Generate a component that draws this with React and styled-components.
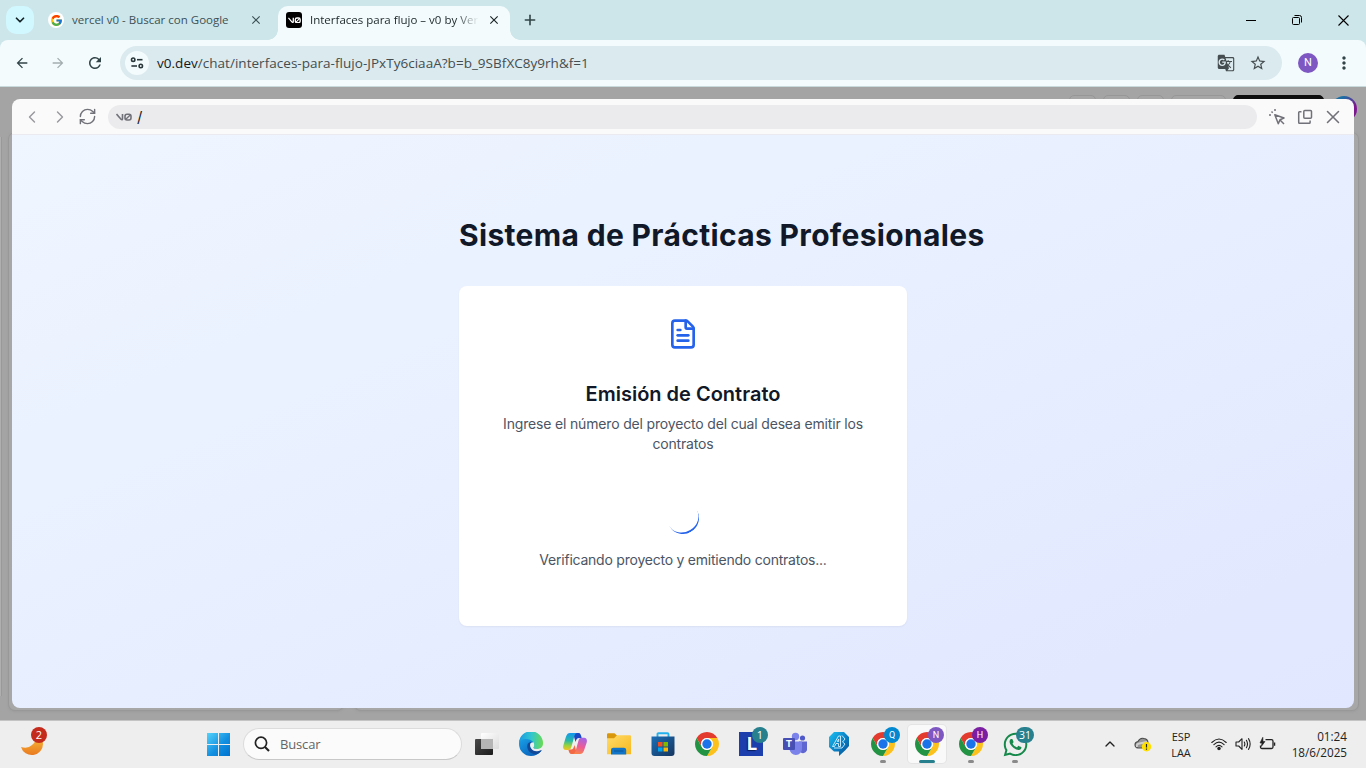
import React from "react";
import styled, { createGlobalStyle } from "styled-components";
import { ChevronLeft, ChevronRight, ChevronDown, ChevronUp, RefreshCw, X, Plus, FileText } from "lucide-react";
import { FcGoogle } from "react-icons/fc";
import { MdArrowBack, MdArrowForward, MdRefresh, MdStarBorder, MdGTranslate, MdMoreVert, MdClose } from "react-icons/md";
import { FaWhatsapp } from "react-icons/fa";

const GlobalStyle = createGlobalStyle`
  * { box-sizing: border-box; }
  body { margin: 0; overflow: hidden; }
  svg { display: block; flex: none; }
`;

const ui = `"Open Sans", "Noto Sans", sans-serif`;

const Screen = styled.div`
  width: 1366px;
  height: 768px;
  display: flex;
  flex-direction: column;
  font-family: ${ui};
  color: #1f2a2e;
  overflow: hidden;
`;

/* Browser chrome */
const TabStrip = styled.header`
  height: 40px;
  display: flex;
  align-items: flex-start;
  background: #cde6ea;
  padding-left: 6px;
`;

const TabSearch = styled.div`
  width: 28px;
  height: 28px;
  margin-top: 6px;
  border-radius: 10px;
  background: #d1f7ff;
  display: grid;
  place-items: center;
`;

const Tab = styled.div`
  position: relative;
  width: ${(p) => p.$width}px;
  height: 34px;
  margin-top: 6px;
  padding: 0 ${(p) => (p.$active ? 9 : 15)}px 6px ${(p) => (p.$active ? 8 : 14)}px;
  display: flex;
  align-items: center;
  gap: 8px;
  border-radius: 10px 10px 0 0;
  background: ${(p) => (p.$active ? "#f4fbfd" : "transparent")};
  color: ${(p) => (p.$active ? "#1b2629" : "#3c5155")};

  &::before,
  &::after {
    content: "";
    display: ${(p) => (p.$active ? "block" : "none")};
    position: absolute;
    bottom: 0;
    width: 10px;
    height: 10px;
  }
  &::before {
    left: -10px;
    background: radial-gradient(circle at 0 0, transparent 9.5px, #f4fbfd 10px);
  }
  &::after {
    right: -10px;
    background: radial-gradient(circle at 100% 0, transparent 9.5px, #f4fbfd 10px);
  }
`;

const TabTitle = styled.span`
  flex: 1;
  white-space: nowrap;
  font-size: 11.5px;
  line-height: 18px;
  mask-image: ${(p) => (p.$fade ? "linear-gradient(90deg, #000 86%, transparent 100%)" : "none")};
`;

const Favicon = styled.span`
  width: 16px;
  height: 16px;
  display: grid;
  place-items: center;
  background: ${(p) => (p.$dark ? "#000" : "#fff")};
  border-radius: ${(p) => (p.$dark ? "3px" : "50%")};
`;

const NewTab = styled.div`
  margin: 12px 0 0 12px;
`;

const WindowControls = styled.div`
  margin-left: auto;
  display: flex;
  height: 40px;
`;

const WindowButton = styled.div`
  width: 46px;
  display: grid;
  place-items: center;
`;

const Toolbar = styled.div`
  background: #cde6ea;
`;

const ToolbarInner = styled.div`
  height: 47px;
  display: flex;
  align-items: center;
  padding: 0 12px 1px 14px;
  background: #f4fbfd;
  border-bottom: 1px solid #c9dadd;
  border-radius: 8px 8px 0 0;
`;

const NavIcon = styled.div`
  width: 16px;
  margin-right: 20px;
  display: grid;
  place-items: center;
  color: ${(p) => (p.$dim ? "#a3adaf" : "#314447")};
`;

const AddressBar = styled.div`
  height: 34px;
  width: 1162px;
  margin-left: -2px;
  border-radius: 17px;
  background: #dbeaee;
  display: flex;
  align-items: center;
  padding: 0 15px 0 5px;
  color: #454d50;
`;

const SiteInfo = styled.div`
  width: 24px;
  height: 24px;
  border-radius: 50%;
  background: #f4fbfd;
  display: grid;
  place-items: center;
  margin-right: 8px;
`;

const Url = styled.span`
  flex: 1;
  font-size: 13.5px;
  letter-spacing: 0.03px;
  white-space: nowrap;
  b { font-weight: 400; color: #15191b; }
`;

const AddressActions = styled.div`
  display: flex;
  align-items: center;
  gap: 14px;
`;

const Profile = styled.div`
  width: 20px;
  height: 20px;
  flex: none;
  margin: 0 16px;
  border-radius: 50%;
  background: #7e57c2;
  color: #fff;
  font: 11px/20px Roboto, sans-serif;
  text-align: center;
`;

/* Dimmed page that lies behind the preview */
const Workspace = styled.main`
  position: relative;
  height: 633px;
  display: flex;
  flex-direction: column;
  background: #a4a4a4;
`;

const PageHeader = styled.div`
  height: 45px;
  padding: 8px 9px 0 0;
  display: flex;
  justify-content: flex-end;
  gap: 7px;
`;

const PageButton = styled.div`
  height: 26px;
  width: ${(p) => p.$width}px;
  border-radius: 5px;
  border: 1px solid ${(p) => (p.$dark ? "#0d0d0d" : "#979797")};
  background: ${(p) => (p.$dark ? "#0d0d0d" : "#a6a6a6")};
`;

const PageAvatar = styled.div`
  width: 26px;
  height: 26px;
  margin-top: 1px;
  border-radius: 50%;
  background: linear-gradient(135deg, #1c6fa5 25%, #7d1790 65%);
`;

const PagePanels = styled.div`
  display: flex;
  flex: 1;
  padding: 0 7px 9px 0;
`;

const SidePanel = styled.div`
  width: 2px;
  margin: 5px 6px 15px 0;
  background: #afafaf;
  border-right: 1px solid #999;
`;

const PagePanel = styled.div`
  flex: ${(p) => (p.$width ? "none" : 1)};
  width: ${(p) => p.$width || 0}px;
  margin-right: ${(p) => (p.$width ? 10 : 0)}px;
  border: 1px solid #989898;
  border-radius: 7px;
  background: #a7a7a7;
  box-shadow: 0 1px 2px #9696968c;
`;

const Preview = styled.section`
  position: absolute;
  inset: 12px;
  display: flex;
  flex-direction: column;
  border-radius: 8px;
  overflow: hidden;
`;

const PreviewBar = styled.div`
  height: 36px;
  flex: none;
  display: flex;
  align-items: center;
  padding: 0 10px;
  background: #fafafa;
  border-bottom: 1px solid #eaeaf0;
  color: #71717a;
`;

const PreviewNav = styled.div`
  width: 86px;
  display: flex;
  align-items: center;
  gap: 8px;
  svg:nth-child(-n + 2) { color: #98989f; }
`;

const PreviewPath = styled.div`
  width: 1150px;
  height: 24px;
  border-radius: 12px;
  background: #ebebed;
  display: flex;
  align-items: center;
  padding-left: 8px;
  gap: 5px;
  color: #1b1b1f;
  font: 15px/24px Inter, sans-serif;
`;

const PreviewActions = styled.div`
  margin-left: 12px;
  display: flex;
  align-items: center;
  gap: 12px;
  svg:last-child { margin-left: -3px; }
`;

const Canvas = styled.div`
  flex: 1;
  display: flex;
  flex-direction: column;
  align-items: center;
  padding-top: 82px;
  background: linear-gradient(to bottom right, #eff6ff, #e0e7ff);
  font-family: Inter, sans-serif;
`;

const Column = styled.div`
  width: 448px;
`;

const Heading = styled.h1`
  margin: 0 0 33px;
  font-size: 30px;
  line-height: 36px;
  font-weight: 700;
  letter-spacing: 0.33px;
  white-space: nowrap;
  color: #111827;
`;

const Card = styled.div`
  height: 340px;
  padding: 32px 24px 0;
  display: flex;
  flex-direction: column;
  align-items: center;
  background: #fff;
  border-radius: 8px;
  box-shadow: 0 1px 2px rgba(0, 0, 0, 0.05);
  text-align: center;
`;

const CardTitle = styled.h2`
  margin: 30px 0 6px;
  font-size: 20px;
  line-height: 28px;
  font-weight: 600;
  color: #111827;
`;

const CardText = styled.p`
  margin: 0;
  width: 400px;
  font-size: 14px;
  line-height: 20px;
  letter-spacing: ${(p) => p.$spacing};
  color: #4b5563;
`;

const Spinner = styled.div`
  width: 32px;
  height: 32px;
  margin: 48px 0 16px;
  border-radius: 50%;
  border-bottom: 2px solid #2563eb;
  transform: rotate(-31deg);
`;

/* Taskbar */
const Taskbar = styled.footer`
  height: 48px;
  padding-bottom: 1px;
  display: flex;
  align-items: center;
  background: #eeeeee;
  border-top: 1px solid #c4c4c4;
`;

const Weather = styled.div`
  position: relative;
  width: 196px;
  padding-left: 20px;
`;

const TaskButton = styled.div`
  position: relative;
  width: 38px;
  height: 38px;
  margin: 0 3px;
  border-radius: 4px;
  display: grid;
  place-items: center;
  background: ${(p) => (p.$active ? "#f9f9f9" : "transparent")};
  box-shadow: ${(p) => (p.$active ? "0 0 0 1px #e4e4e4" : "none")};

  &::after {
    content: "";
    display: ${(p) => (p.$running ? "block" : "none")};
    position: absolute;
    bottom: 0;
    left: 50%;
    width: ${(p) => (p.$active ? 16 : 6)}px;
    height: 3px;
    border-radius: 2px;
    transform: translateX(-50%);
    background: ${(p) => (p.$active ? "#27808e" : "#8a8a8a")};
  }
`;

const Badge = styled.span`
  position: absolute;
  top: ${(p) => p.$top ?? 2}px;
  left: ${(p) => p.$left ?? 20}px;
  width: ${(p) => p.$width || 16}px;
  height: 16px;
  border-radius: 8px;
  background: ${(p) => p.$color};
  color: #fff;
  text-align: center;
  font: ${(p) => p.$size || 9}px/16px ${(p) => (p.$size ? ui : "Roboto, sans-serif")};
`;

const SearchBox = styled.div`
  width: 219px;
  height: 32px;
  margin: 0 3px 0 3px;
  padding-left: 10px;
  display: flex;
  align-items: center;
  gap: 10px;
  border: 1px solid #dcdcdc;
  border-bottom-color: #c8c8c8;
  border-radius: 16px;
  background: #fbfbfb;
  color: #646464;
  font-size: 13px;
  letter-spacing: -0.15px;
`;

const Tray = styled.div`
  margin-left: auto;
  padding-right: 19px;
  display: flex;
  align-items: center;
  color: #222;
  font-size: 11px;
  line-height: 16px;
`;

const CloudStatus = styled.div`
  margin-left: 16px;
`;

const Language = styled.div`
  width: 30px;
  margin: 1px 15px 0 14px;
  text-align: center;
  letter-spacing: -0.1px;
`;

const Status = styled.div`
  display: flex;
  align-items: center;
  gap: 7.5px;
`;

const Clock = styled.div`
  width: 71px;
  text-align: right;
  font-size: 11.7px;
  line-height: 16px;
`;

const V0Logo = ({ width, color }) => (
  <svg width={width} height={width / 2} viewBox="0 0 32 16" fill="none" stroke={color} strokeWidth="3.2">
    <path d="M1 2 L10 12.5 Q13 15 13 11 V2" />
    <rect x="18" y="2.4" width="12" height="11.6" rx="4" />
    <path d="M19 13 L29 3.5" strokeWidth="2.6" />
  </svg>
);

const TuneIcon = () => (
  <svg width="14" height="14" viewBox="0 0 14 14" fill="none" stroke="#2a383b" strokeWidth="1.6">
    <circle cx="3.2" cy="3.7" r="1.7" />
    <path d="M7 3.7H12.5" />
    <circle cx="10.8" cy="10" r="1.7" />
    <path d="M1.4 10H7" />
  </svg>
);

const ChromeLogo = () => (
  <svg width="24" height="24" viewBox="0 0 48 48">
    <path fill="#e33b2e" d="M24 12H44.78A24 24 0 0 0 3.22 12L13.61 30A12 12 0 0 1 24 12Z" />
    <path fill="#fcc21b" d="M34.39 30L24 48A24 24 0 0 0 44.78 12H24A12 12 0 0 1 34.39 30Z" />
    <path fill="#229342" d="M13.61 30L3.22 12A24 24 0 0 0 24 48L34.39 30A12 12 0 0 1 13.61 30Z" />
    <circle cx="24" cy="24" r="12" fill="#fff" />
    <circle cx="24" cy="24" r="9.4" fill="#1a73e8" />
  </svg>
);

const WindowsLogo = () => (
  <svg width="23" height="23" viewBox="0 0 23 23">
    <defs>
      <linearGradient id="win" x1="0" y1="0" x2="23" y2="23" gradientUnits="userSpaceOnUse">
        <stop stopColor="#54d3fb" />
        <stop offset=".55" stopColor="#1390e0" />
        <stop offset="1" stopColor="#0072cf" />
      </linearGradient>
    </defs>
    <path fill="url(#win)" d="M0 0h11v11H0zM12 0h11v11H12zM0 12h11v11H0zM12 12h11v11H12z" />
  </svg>
);

const TaskView = () => (
  <svg width="24" height="24" viewBox="0 0 24 24">
    <defs>
      <linearGradient id="tvDark" x1="0" y1="0" x2="1" y2="1">
        <stop stopColor="#4a4a4a" />
        <stop offset="1" stopColor="#1c1c1c" />
      </linearGradient>
      <linearGradient id="tvLight" x1="0" y1="0" x2="1" y2="1">
        <stop stopColor="#fff" />
        <stop offset="1" stopColor="#dcdcdc" />
      </linearGradient>
    </defs>
    <rect x="6" y="1" width="18" height="16" rx="1" fill="url(#tvLight)" />
    <rect x="0" y="7" width="18" height="16" rx="1" fill="url(#tvDark)" />
    <path d="M6 7H18V17H6Z" fill="#b5b5b5" />
  </svg>
);

const EdgeLogo = () => (
  <svg width="24" height="24" viewBox="0 0 24 24">
    <defs>
      <linearGradient id="edTop" x1="0" y1="8" x2="24" y2="10" gradientUnits="userSpaceOnUse">
        <stop stopColor="#1c9be0" />
        <stop offset=".5" stopColor="#31c6d0" />
        <stop offset="1" stopColor="#69db52" />
      </linearGradient>
      <linearGradient id="edLeft" x1="2" y1="8" x2="12" y2="24" gradientUnits="userSpaceOnUse">
        <stop stopColor="#189be3" />
        <stop offset="1" stopColor="#0a65bd" />
      </linearGradient>
    </defs>
    <path fill="url(#edLeft)" d="M12 0A12 12 0 0 0 12 24Q18 24 22.500 18.500L14 15V6Z" />
    <path fill="url(#edTop)" d="M0 11A12 12 0 0 1 24 11.500C24 15 21.500 17 18.500 17C16 17 14 16.200 14.500 15C16 13 15 9.500 11 7.800C6.500 6 1.500 7 0 11Z" />
    <path fill="#11499a" d="M8.500 12.500C7 18 12 23 18.500 22C20.500 21 22 19.500 22.700 17.900C19 20 13 19 11.500 15C11 13 11.500 11 12.500 10C10.500 9.800 9 11 8.500 12.500Z" />
    <path fill="#eee" d="M11.500 11.200C10 14 12.500 19.500 18 19.300C20.500 19 22 18.200 22.900 17.300L24 17V14.800C22.500 16.500 20.500 17 18.500 17C16 17 13.800 16.200 14.500 15C15.500 13.500 15 11.500 13.500 10.300Z" />
  </svg>
);

const CopilotLogo = () => (
  <svg width="24" height="24" viewBox="0 0 24 24">
    <defs>
      <linearGradient id="cpA" x1="6" y1="1" x2="5" y2="18" gradientUnits="userSpaceOnUse">
        <stop stopColor="#1597ee" />
        <stop offset=".45" stopColor="#28b9a6" />
        <stop offset=".75" stopColor="#9bd23c" />
        <stop offset="1" stopColor="#f3c321" />
      </linearGradient>
      <linearGradient id="cpB" x1="20" y1="6" x2="14" y2="23" gradientUnits="userSpaceOnUse">
        <stop stopColor="#a265e8" />
        <stop offset=".5" stopColor="#ed5b97" />
        <stop offset="1" stopColor="#fb8a3c" />
      </linearGradient>
    </defs>
    <path fill="#1b48c4" d="M10 1H15.500C17.500 1 18 3 18.700 6H16C14 6 13.500 7 12.500 10Z" />
    <path fill="#f36945" d="M14 22H8.500C6.500 22 6 20 5.300 17.500H8C10 17.500 10.500 16 11.500 13Z" />
    <path fill="url(#cpA)" d="M7 1H14C12 1.500 11.700 3 11 5.500L8.500 14.500C7.800 17 7 18 5 18H3C0 18 -.2 15.500 .3 13.500L3 4.500C4 2 5 1 7 1Z" />
    <path fill="url(#cpB)" d="M17 22H10C12 21.500 12.300 20 13 17.500L15.500 8.500C16.200 6.500 17 5.800 19 5.800H21C24 6 24.200 8.500 23.700 10.500L21 18.500C20 21 19 22 17 22Z" />
  </svg>
);

const FolderIcon = () => (
  <svg width="24" height="24" viewBox="0 0 24 24">
    <defs>
      <linearGradient id="fold" x1="0" y1="0" x2="1" y2="1">
        <stop stopColor="#ffdc69" />
        <stop offset="1" stopColor="#f9b81e" />
      </linearGradient>
    </defs>
    <path d="M0 2.500Q0 1.300 1.200 1.300H7.500L10 3.500V8H0Z" fill="#d9970b" />
    <path d="M0 6.200H7L10 3.200H23Q24 3.200 24 4.200V22.200H0Z" fill="url(#fold)" />
    <path d="M4 22.500V18Q4 15.800 6.200 15.800H17Q19.200 15.800 19.200 18V22.500Z" fill="#1375c8" />
    <path d="M7 19H16.500" stroke="#0b5a9e" strokeWidth="1.200" />
  </svg>
);

const StoreIcon = () => (
  <svg width="24" height="24" viewBox="0 0 24 24">
    <defs>
      <linearGradient id="store" x1="0" y1="0" x2="1" y2="1">
        <stop stopColor="#1a70b8" />
        <stop offset="1" stopColor="#17355e" />
      </linearGradient>
    </defs>
    <path d="M6.500 6V2.200Q6.500 1.200 7.500 1.200H16.500Q17.500 1.200 17.500 2.200V6" fill="none" stroke="#24b2ee" strokeWidth="1.900" />
    <path d="M.5 4.500H23.500V21Q23.500 24 20.500 24H3.500Q.5 24 .5 21Z" fill="url(#store)" />
    <path d="M7 10h4.500v4.500h-4.500z" fill="#f25022" />
    <path d="M12.500 10h4.500v4.500h-4.500z" fill="#7fba00" />
    <path d="M7 15.500h4.500v4h-4.500z" fill="#00a4ef" />
    <path d="M12.500 15.500h4.500v4h-4.500z" fill="#ffb900" />
  </svg>
);

const LTile = styled.div`
  width: 24px;
  height: 24px;
  padding-left: 2px;
  background: #1d3fae;
  color: #fff;
  text-align: center;
  text-shadow: -1px 1px 1px #0a1d5c;
  font: 700 18px/24px Inter, sans-serif;
`;

const TeamsIcon = () => (
  <svg width="24" height="24" viewBox="0 0 24 24">
    <circle cx="19.500" cy="6" r="2.600" fill="#5059c9" />
    <circle cx="12.500" cy="4.500" r="3.700" fill="#7b83eb" />
    <path d="M16 9.500H24V16A4 4 0 0 1 16 18Z" fill="#5f66d2" />
    <path d="M6.500 9.500H19V16.500A6 6 0 0 1 6.500 17Z" fill="#7b83eb" />
    <rect y="6" width="12" height="12" rx="1" fill="#4650b4" />
    <text x="6" y="15.300" fill="#fff" fontSize="9.500" fontWeight="700" fontFamily="Inter, sans-serif" textAnchor="middle">T</text>
  </svg>
);

const PenBadge = () => (
  <svg width="22" height="24" viewBox="0 0 22 24">
    <defs>
      <linearGradient id="pen" x1="0" y1="0" x2="1" y2="1">
        <stop stopColor="#1ec2f4" />
        <stop offset=".55" stopColor="#087dc2" />
        <stop offset="1" stopColor="#064f92" />
      </linearGradient>
    </defs>
    <path d="M6 0H16L21 5V14L17 18.500L11 24V19.500H6L1 15V5Z" fill="url(#pen)" />
    <path d="M4.500 14.500L10.500 4H12.500V14.500H10.500V11.500H8L6.500 14.500ZM9.300 9.500H10.700V7ZM14 3.500L17 7L14.500 10L17 12L14 16H6" fill="none" stroke="#d3f4ff" strokeWidth=".9" />
  </svg>
);

const MoonIcon = () => (
  <svg width="24" height="24" viewBox="0 0 24 24">
    <defs>
      <linearGradient id="moon" x1="0" y1="0" x2="0" y2="1">
        <stop stopColor="#f8c33d" />
        <stop offset="1" stopColor="#ea7a20" />
      </linearGradient>
    </defs>
    <path d="M17 2Q23 6 23 12A11.200 11 0 0 1 1 15Q8 17 12 13Q17 9 17 2Z" fill="url(#moon)" />
  </svg>
);

const CursorClick = () => (
  <svg width="16" height="16" viewBox="0 0 16 16" fill="none" stroke="currentColor" strokeWidth="1.500">
    <path d="M5.800 5.800L15 9L11 10.700L9.300 14.700Z" strokeLinejoin="round" />
    <path d="M11 11L15 15M2.500 2.500L3.700 3.700M6 0V2M0 6H2" />
  </svg>
);

const PopOut = () => (
  <svg width="16" height="16" viewBox="0 0 16 16" fill="none" stroke="currentColor" strokeWidth="1.500">
    <rect x="6.800" y="1.500" width="7.700" height="7.700" rx="1" />
    <path d="M4.500 2.700H2.500Q1.700 2.700 1.700 3.500V13.400Q1.700 14.200 2.500 14.200H12.300Q13.100 14.200 13.100 13.400V11.500" />
  </svg>
);

const OneDriveAlert = () => (
  <svg width="18" height="16" viewBox="0 0 18 16">
    <path d="M4 12Q1 11.500 1 8.700Q1 6 4 5.500Q6 1.500 10 2.500Q14 3 14 7L9 12Z" fill="#969696" stroke="#4a4a4a" strokeWidth="1.100" />
    <path d="M3 11Q2 8 5.500 7.500L13 6" stroke="#cfcfcf" strokeWidth="2" fill="none" />
    <circle cx="12.500" cy="10.800" r="4.700" fill="#ffdf00" />
    <path d="M12.500 8V11.500M12.500 12.500V13.800" stroke="#222" strokeWidth="1.200" />
  </svg>
);

const WifiIcon = () => (
  <svg width="16" height="14" viewBox="0 0 16 14" fill="none" stroke="#222" strokeWidth="1.100" strokeLinecap="round">
    <path d="M.8 5.500Q8-1.500 15.200 5.500M2.900 7.700Q8 2.700 13.100 7.700M5 9.800Q8 7 11 9.800" />
    <circle cx="8" cy="11.600" r="1.200" fill="#222" />
  </svg>
);

const VolumeIcon = () => (
  <svg width="17" height="14" viewBox="0 0 17 14" fill="none" stroke="#222" strokeWidth="1.100" strokeLinecap="round" strokeLinejoin="round">
    <path d="M1 5V9H3.700L7 12.300V1.700L3.700 5Z" />
    <path d="M9.300 5Q10.400 7 9.300 9M11.400 3.300Q13.600 7 11.400 10.700M13.500 1.600Q16.800 7 13.500 12.400" />
  </svg>
);

const BatteryIcon = () => (
  <svg width="17" height="14" viewBox="0 0 17 14" fill="none" stroke="#222" strokeWidth="1.300">
    <path d="M6.500 2.700H12.500Q14 2.700 14 4.200V10Q14 11.500 12.500 11.500H3Q1.500 11.500 1.500 10V8.500M15.600 5.500V8.700" />
    <path d="M3.800 .3L1 6H3L2.300 9.500L6 4.500H4Z" fill="#222" strokeWidth=".6" />
  </svg>
);

const chromeProfiles = [
  { letter: "Q", color: "#0288d1" },
  { letter: "N", color: "#7e57c2", active: true },
  { letter: "H", color: "#7b1fa2" },
];

export default function App() {
  return (
    <Screen>
      <GlobalStyle />
      <TabStrip>
        <TabSearch><ChevronDown size={14} strokeWidth={3} color="#142326" /></TabSearch>
        <Tab $width={244}>
          <Favicon><FcGoogle size={13} /></Favicon>
          <TabTitle>vercel v0 - Buscar con Google</TabTitle>
          <MdClose size={14} />
        </Tab>
        <Tab $width={232} $active>
          <Favicon $dark><V0Logo width={13} color="#fff" /></Favicon>
          <TabTitle $fade>Interfaces para flujo – v0 by Ver</TabTitle>
          <MdClose size={14} />
        </Tab>
        <NewTab><Plus size={16} strokeWidth={2.4} color="#314447" /></NewTab>
        <WindowControls>
          <WindowButton><svg width="10" height="10" stroke="#000"><path d="M0 5.500H10" /></svg></WindowButton>
          <WindowButton>
            <svg width="10" height="10" fill="none" stroke="#000">
              <rect x=".5" y="2.500" width="7" height="7" rx="1" />
              <path d="M2.500 .5H7.500Q9.500 .5 9.500 2.500V7.500" />
            </svg>
          </WindowButton>
          <WindowButton><svg width="11" height="11" stroke="#000" strokeWidth="1.100"><path d="M.5 .5L10.500 10.500M10.500 .5L.5 10.500" /></svg></WindowButton>
        </WindowControls>
      </TabStrip>
      <Toolbar>
        <ToolbarInner>
          <NavIcon><MdArrowBack size={16} /></NavIcon>
          <NavIcon $dim><MdArrowForward size={16} /></NavIcon>
          <NavIcon><MdRefresh size={18} /></NavIcon>
          <AddressBar>
            <SiteInfo><TuneIcon /></SiteInfo>
            <Url><b>v0.dev</b>/chat/interfaces-para-flujo-JPxTy6ciaaA?b=b_9SBfXC8y9rh&amp;f=1</Url>
            <AddressActions>
              <MdGTranslate size={18} />
              <MdStarBorder size={18} />
            </AddressActions>
          </AddressBar>
          <Profile>N</Profile>
          <MdMoreVert size={20} color="#314447" />
        </ToolbarInner>
      </Toolbar>

      <Workspace>
        <PageHeader>
          <PageButton $width={27} />
          <PageButton $width={27} />
          <PageButton $width={27} />
          <PageButton $width={55} />
          <PageButton $width={91} $dark />
          <PageAvatar />
        </PageHeader>
        <PagePanels>
          <SidePanel />
          <PagePanel $width={336} />
          <PagePanel />
        </PagePanels>

        <Preview>
          <PreviewBar>
            <PreviewNav>
              <ChevronLeft size={20} strokeWidth={1.7} />
              <ChevronRight size={20} strokeWidth={1.7} />
              <RefreshCw size={19} strokeWidth={1.8} />
            </PreviewNav>
            <PreviewPath><V0Logo width={16} color="#71717a" /><span>/</span></PreviewPath>
            <PreviewActions>
              <CursorClick />
              <PopOut />
              <X size={22} strokeWidth={1.7} />
            </PreviewActions>
          </PreviewBar>
          <Canvas>
            <Column>
              <Heading>Sistema de Prácticas Profesionales</Heading>
              <Card>
                <FileText size={32} color="#2563eb" />
                <CardTitle>Emisión de Contrato</CardTitle>
                <CardText $spacing="-0.17px">Ingrese el número del proyecto del cual desea emitir los contratos</CardText>
                <Spinner />
                <CardText $spacing="-0.23px">Verificando proyecto y emitiendo contratos...</CardText>
              </Card>
            </Column>
          </Canvas>
        </Preview>
      </Workspace>

      <Taskbar>
        <Weather>
          <MoonIcon />
          <Badge $color="#c42b1c" $left={31} $top={-5} $size={11}>2</Badge>
        </Weather>
        <TaskButton><WindowsLogo /></TaskButton>
        <SearchBox>
          <svg width="16" height="16" viewBox="0 0 16 16" fill="none" stroke="#222" strokeWidth="1.700">
            <circle cx="7" cy="6.800" r="5.600" />
            <path d="M11 11L15 15" strokeWidth="2.200" />
          </svg>
          Buscar
        </SearchBox>
        <TaskButton><TaskView /></TaskButton>
        <TaskButton><EdgeLogo /></TaskButton>
        <TaskButton><CopilotLogo /></TaskButton>
        <TaskButton><FolderIcon /></TaskButton>
        <TaskButton><StoreIcon /></TaskButton>
        <TaskButton><ChromeLogo /></TaskButton>
        <TaskButton><LTile>L</LTile><Badge $color="#27808e" $size={11}>1</Badge></TaskButton>
        <TaskButton><TeamsIcon /></TaskButton>
        <TaskButton><PenBadge /></TaskButton>
        {chromeProfiles.map((p) => (
          <TaskButton key={p.letter} $running $active={p.active}>
            <ChromeLogo />
            <Badge $color={p.color}>{p.letter}</Badge>
          </TaskButton>
        ))}
        <TaskButton $running>
          <FaWhatsapp size={27} color="#16884a" />
          <Badge $color="#27808e" $width={18} $size={10.5}>31</Badge>
        </TaskButton>
        <Tray>
          <ChevronUp size={16} strokeWidth={2} />
          <CloudStatus><OneDriveAlert /></CloudStatus>
          <Language>ESP LAA</Language>
          <Status><WifiIcon /><VolumeIcon /><BatteryIcon /></Status>
          <Clock>01:24<br />18/6/2025</Clock>
        </Tray>
      </Taskbar>
    </Screen>
  );
}
